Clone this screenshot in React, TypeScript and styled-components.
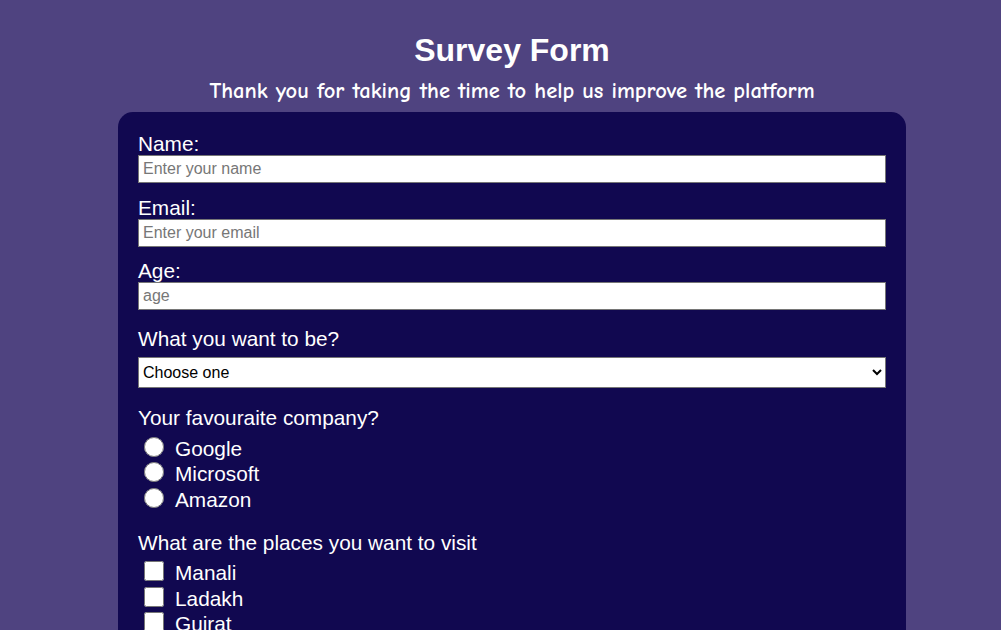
import React from "react";
import styled, { createGlobalStyle } from "styled-components";

const Global = createGlobalStyle`
  html, body { margin: 0; padding: 0; background: #4f4380; }
  body { font-family: "Liberation Sans", Arial, sans-serif; color: #fff; }
  * { box-sizing: border-box; }
`;

const Page = styled.div`
  display: flex;
  flex-direction: column;
  align-items: center;
  padding: 32px 0 0 23px;
`;

const Title = styled.h1`
  margin: 0;
  font-size: 32px;
  font-weight: bold;
  line-height: 37px;
`;

const Subtitle = styled.p`
  margin: 7px 0 6px;
  font-family: "Comic Sans MS", "Comic Neue", cursive;
  font-size: 22.5px;
  font-weight: bold;
  line-height: 30px;
`;

const Card = styled.form`
  width: 788px;
  background: #110850;
  border-radius: 15px;
  padding: 20px 20px 20px;
  display: flex;
  flex-direction: column;
  min-height: 560px;
`;

const Field = styled.div<{ $gap?: number }>`
  display: flex;
  flex-direction: column;
  margin-bottom: ${(p) => p.$gap ?? 14}px;
`;

const Label = styled.label`
  font-size: 20.8px;
  line-height: 23px;
`;

const Question = styled.div<{ $space?: number }>`
  font-size: 20.8px;
  line-height: 23px;
  margin-bottom: ${(p) => p.$space ?? 6}px;
`;

const TextInput = styled.input`
  width: 100%;
  height: 28px;
  font-family: "Liberation Sans", Arial, sans-serif;
  font-size: 16px;
  padding: 2px 4px;
  border: 1px solid #767676;
  border-radius: 0;
  background: #fff;
  color: #000;
  &::placeholder { color: #777; }
`;

const Select = styled.select`
  width: 100%;
  height: 31px;
  font-family: "Liberation Sans", Arial, sans-serif;
  font-size: 16px;
  padding: 0;
  border: 1px solid #767676;
  border-radius: 0;
  background: #fff;
  color: #000;
`;

const OptionRow = styled.label`
  display: flex;
  align-items: center;
  height: 25.5px;
  font-size: 20.8px;
  padding-left: 5px;
`;

const Radio = styled.input`
  width: 20px;
  height: 20px;
  margin: 0 11px 4px 1px;
  accent-color: #fff;
`;

const Check = styled.input`
  width: 20px;
  height: 20px;
  margin: 0 11px 4px 1px;
`;

export default function App() {
  return (
    <>
      <Global />
      <Page>
        <Title>Survey Form</Title>
        <Subtitle>Thank you for taking the time to help us improve the platform</Subtitle>
        <Card onSubmit={(e) => e.preventDefault()}>
          <Field $gap={13}>
            <Label htmlFor="name">Name:</Label>
            <TextInput id="name" type="text" placeholder="Enter your name" />
          </Field>
          <Field $gap={12}>
            <Label htmlFor="email">Email:</Label>
            <TextInput id="email" type="email" placeholder="Enter your email" />
          </Field>
          <Field $gap={17}>
            <Label htmlFor="age">Age:</Label>
            <TextInput id="age" type="number" placeholder="age" />
          </Field>
          <Field $gap={18}>
            <Question $space={7}>What you want to be?</Question>
            <Select defaultValue="">
              <option value="">Choose one</option>
              <option>Developer</option>
              <option>Designer</option>
            </Select>
          </Field>
          <Field $gap={18}>
            <Question $space={7}>Your favouraite company?</Question>
            <OptionRow><Radio type="radio" name="company" />Google</OptionRow>
            <OptionRow><Radio type="radio" name="company" />Microsoft</OptionRow>
            <OptionRow><Radio type="radio" name="company" />Amazon</OptionRow>
          </Field>
          <Field>
            <Question $space={7}>What are the places you want to visit</Question>
            <OptionRow><Check type="checkbox" />Manali</OptionRow>
            <OptionRow><Check type="checkbox" />Ladakh</OptionRow>
            <OptionRow><Check type="checkbox" />Gujrat</OptionRow>
          </Field>
        </Card>
      </Page>
    </>
  );
}
